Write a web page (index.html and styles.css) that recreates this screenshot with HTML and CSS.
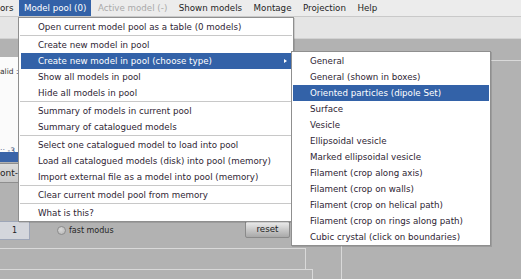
FILE: index.html
```html
<!DOCTYPE html>
<html>
<head>
<meta charset="utf-8">
<link rel="stylesheet" href="styles.css">
</head>
<body>
<div class="app">
  <nav class="menubar">
    <span class="mi first">ors</span>
    <span class="mi active">Model pool (0)</span>
    <span class="mi disabled">Active model (-)</span>
    <span class="mi">Shown models</span>
    <span class="mi">Montage</span>
    <span class="mi">Projection</span>
    <span class="mi">Help</span>
  </nav>
  <div class="toolbar"></div>
  <div class="content">
    <div class="leftcol">
      <div class="band"></div>
      <div class="textpanel">
        <div class="t1">alid :</div>
        <div class="t2">:: -3.</div>
      </div>
      <div class="selstrip"></div>
      <div class="btnrow"><span class="fontbtn">ont-</span></div>
      <div class="spacer"></div>
      <div class="controls">
        <span class="field">1</span>
        <span class="radio"><span class="circle"></span>fast modus</span>
        <span class="reset">reset</span>
      </div>
      <div class="group1"></div>
      <div class="group2"></div>
    </div>
    <div class="rightcol"></div>
  </div>

  <div class="menu mainmenu">
    <div class="item">Open current model pool as a table (0 models)</div>
    <div class="sep"></div>
    <div class="item">Create new model in pool</div>
    <div class="item hl">Create new model in pool (choose type)<span class="arrow"></span></div>
    <div class="item">Show all models in pool</div>
    <div class="item">Hide all models in pool</div>
    <div class="sep"></div>
    <div class="item">Summary of models in current pool</div>
    <div class="item">Summary of catalogued models</div>
    <div class="sep"></div>
    <div class="item">Select one catalogued model to load into pool</div>
    <div class="item">Load all catalogued models (disk) into pool (memory)</div>
    <div class="item">Import external file as a model into pool (memory)</div>
    <div class="sep"></div>
    <div class="item">Clear current model pool from memory</div>
    <div class="sep"></div>
    <div class="item">What is this?</div>
  </div>

  <div class="menu submenu">
    <div class="item">General</div>
    <div class="item">General (shown in boxes)</div>
    <div class="item hl">Oriented particles (dipole Set)</div>
    <div class="item">Surface</div>
    <div class="item">Vesicle</div>
    <div class="item">Ellipsoidal vesicle</div>
    <div class="item">Marked ellipsoidal vesicle</div>
    <div class="item">Filament (crop along axis)</div>
    <div class="item">Filament (crop on walls)</div>
    <div class="item">Filament (crop on helical path)</div>
    <div class="item">Filament (crop on rings along path)</div>
    <div class="item">Cubic crystal (click on boundaries)</div>
  </div>
</div>
</body>
</html>
```
FILE: styles.css
```css
html, body {
  margin: 0;
  padding: 0;
}
body {
  width: 521px;
  height: 279px;
  overflow: hidden;
  background: #b2b2b2;
  font-family: "DejaVu Sans", "Liberation Sans", sans-serif;
}
.app {
  position: relative;
  width: 521px;
  height: 279px;
  overflow: hidden;
  background: #b2b2b2;
}
.menubar {
  display: flex;
  gap: 1.5px;
  height: 16px;
  line-height: 16px;
  background: #ececec;
  border-bottom: 1px solid #c9c9c9;
  font-size: 8.7px;
  color: #1f1f1f;
  white-space: nowrap;
}
.mi {
  padding: 0 5px;
}
.mi.first {
  padding: 0 4px 0 0;
}
.mi.active {
  background: #3362a8;
  color: #ffffff;
}
.mi.disabled {
  color: #a9a9a9;
}
.toolbar {
  height: 21px;
  background: #e5e5e5;
  border-bottom: 1px solid #d2d2d2;
}
.content {
  display: flex;
}
.leftcol {
  width: 341px;
  display: flex;
  flex-direction: column;
}
.band {
  height: 18px;
}
.textpanel {
  width: 290px;
  height: 95px;
  background: #fbfbfb;
  font-size: 7.5px;
  color: #333;
  box-sizing: border-box;
  padding-top: 10px;
  line-height: 9px;
}
.t2 {
  margin-top: 70px;
  color: #2a3e70;
}
.selstrip {
  width: 290px;
  height: 10px;
  background: #3a64a8;
}
.btnrow {
  margin-top: 1px;
  height: 20px;
  display: flex;
}
.fontbtn {
  width: 60px;
  height: 20px;
  box-sizing: border-box;
  border: 1px solid #8e8e8e;
  border-left: none;
  background: linear-gradient(#dcdcdc, #c6c6c6);
  font-size: 9px;
  line-height: 18px;
  color: #222;
  padding-left: 0;
}
.spacer {
  height: 38px;
}
.controls {
  width: 290px;
  height: 19px;
  display: flex;
  align-items: center;
}
.field {
  width: 30px;
  height: 19px;
  box-sizing: border-box;
  border: 1px solid #9ea6b8;
  border-left: none;
  background: #d4d6dc;
  font-size: 8px;
  line-height: 17px;
  color: #222;
  text-align: center;
}
.radio {
  display: flex;
  align-items: center;
  margin-left: 27px;
  font-size: 8px;
  color: #262626;
  margin-top: -1px;
}
.circle {
  width: 9px;
  height: 9px;
  box-sizing: border-box;
  border-radius: 50%;
  border: 1px solid #8c8c8c;
  background: radial-gradient(circle at 40% 35%, #d8d8d8, #b4b4b4);
  margin-right: 3px;
}
.reset {
  margin-left: auto;
  width: 45px;
  height: 17px;
  box-sizing: border-box;
  border: 1px solid #8a8a8a;
  border-radius: 2px;
  background: linear-gradient(#ececec, #c6c6c6 55%, #a9a9a9);
  font-size: 8.7px;
  line-height: 15px;
  text-align: center;
  color: #1e1e1e;
  align-self: flex-start;
}
.group1 {
  margin-top: 8px;
  width: 306px;
  height: 21px;
  box-sizing: border-box;
  border-top: 1px solid #d9d9d9;
  border-right: 1px solid #d9d9d9;
}
.group2 {
  width: 313px;
  height: 20px;
  box-sizing: border-box;
  border-top: 1px solid #d9d9d9;
  border-right: 1px solid #d9d9d9;
}
.rightcol {
  flex: 1;
  margin-top: 21px;
  height: 220px;
  border-top: 1px solid #d9d9d9;
  border-left: 1px solid #d9d9d9;
}
.menu {
  position: absolute;
  background: #ffffff;
  border: 1px solid #8f8f8f;
  box-shadow: 1px 1px 0 rgba(0, 0, 0, 0.12);
  font-size: 8.7px;
  color: #2e2433;
  white-space: nowrap;
  padding-top: 1px;
}
.mainmenu {
  left: 18px;
  top: 17px;
  width: 274px;
}
.submenu {
  left: 291px;
  top: 51px;
  width: 198px;
}
.item {
  height: 16px;
  line-height: 16px;
  display: flex;
  align-items: center;
}
.mainmenu .item {
  padding-left: 19px;
}
.submenu .item {
  padding-left: 18px;
}
.mainmenu .item.hl {
  margin: 0 1px 0 2px;
  padding-left: 17px;
  background: #3362a8;
  color: #ffffff;
}
.submenu .item.hl {
  margin: 0 1px;
  padding-left: 17px;
  background: #3362a8;
  color: #ffffff;
}
.arrow {
  margin-left: auto;
  margin-right: 5px;
  width: 0;
  height: 0;
  border-left: 3px solid #ffffff;
  border-top: 2.5px solid transparent;
  border-bottom: 2.5px solid transparent;
}
.sep {
  height: 1px;
  background: #c8c8c8;
  border-bottom: 1px solid #ffffff;
  margin: 0 1px;
}
```
